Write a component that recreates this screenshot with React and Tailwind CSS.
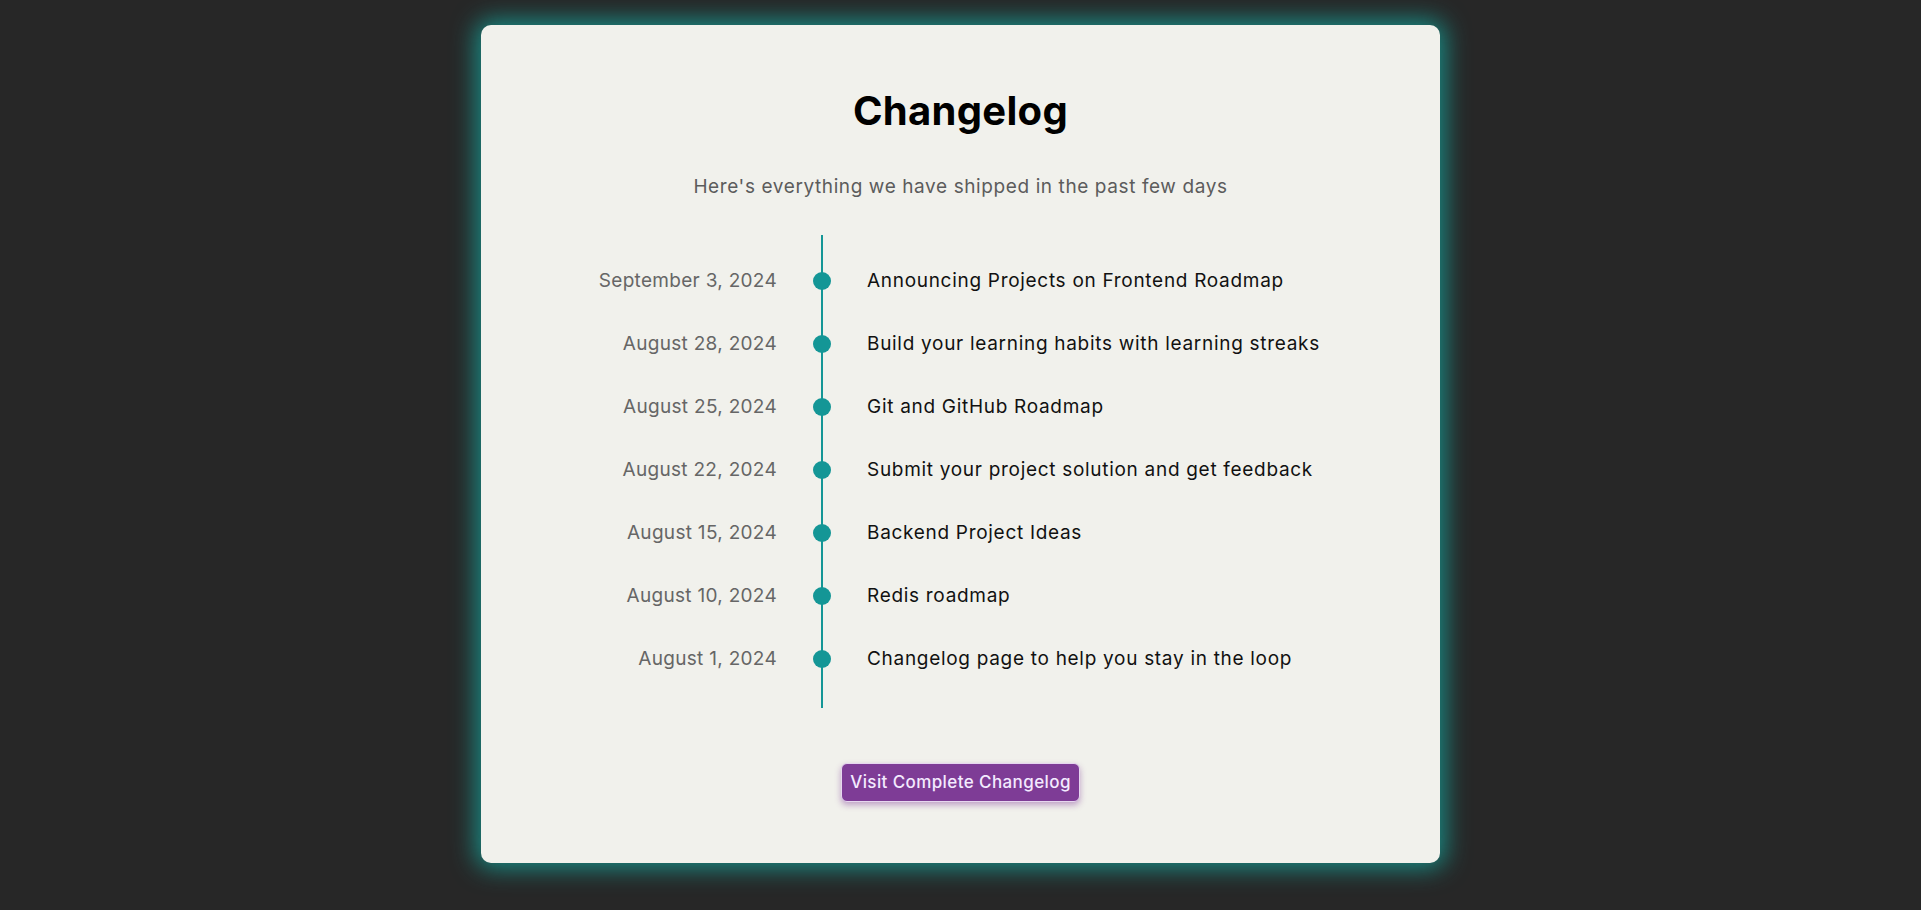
import React from "react";

const entries = [
  { date: "September 3, 2024", title: "Announcing Projects on Frontend Roadmap" },
  { date: "August 28, 2024", title: "Build your learning habits with learning streaks" },
  { date: "August 25, 2024", title: "Git and GitHub Roadmap" },
  { date: "August 22, 2024", title: "Submit your project solution and get feedback" },
  { date: "August 15, 2024", title: "Backend Project Ideas" },
  { date: "August 10, 2024", title: "Redis roadmap" },
  { date: "August 1, 2024", title: "Changelog page to help you stay in the loop" },
];

const App = () => {
  return (
    <div className="min-h-screen bg-[#272727] pt-[25px] pb-[47px] font-['Inter',sans-serif]">
      <div className="w-[959px] mx-auto bg-[#f1f1ec] rounded-[10px] shadow-[0_0_24px_5px_rgba(22,160,152,0.85)] pt-[62px] pb-[61px]">
        {/* Header */}
        <h1 className="text-center text-[40px] leading-[48px] font-bold text-black tracking-[0.3px]">
          Changelog
        </h1>
        <p className="mt-[38px] text-center text-[19px] leading-[28px] tracking-[0.6px] text-[#5c5c5c]">
          Here's everything we have shipped in the past few days
        </p>

        {/* Timeline */}
        <div className="relative mt-[34px] pt-[14px] pb-[18px]">
          <div className="absolute left-[340px] top-0 bottom-0 w-[2px] bg-[#149696]"></div>
          {entries.map((item) => (
            <div key={item.date} className="flex items-center h-[63px]">
              <div className="w-[296px] pt-[1px] text-right text-[19px] tracking-[0.3px] text-[#666666]">
                {item.date}
              </div>
              <div className="w-[90px] flex justify-center">
                <div className="relative w-[18px] h-[18px] rounded-full bg-[#149696]"></div>
              </div>
              <div className="pt-[1px] text-[19px] tracking-[0.7px] text-[#111111]">{item.title}</div>
            </div>
          ))}
        </div>

        {/* Button */}
        <div className="mt-[55px] flex justify-center">
          <button className="h-[39px] px-[8px] rounded-[6px] bg-[#7e3c96] border border-[#e6d6ef] text-[#f3eaff] text-[17px] tracking-[0.4px] font-medium shadow-[0_3px_6px_rgba(126,60,150,0.45)]">
            Visit Complete Changelog
          </button>
        </div>
      </div>
    </div>
  );
};

export default App;
